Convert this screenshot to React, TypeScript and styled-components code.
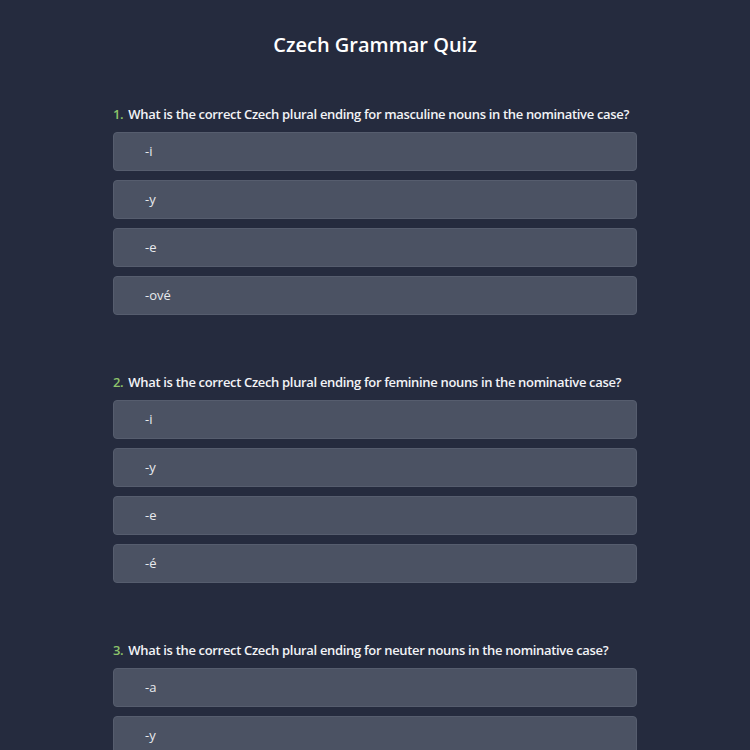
import React from 'react'
import styled, { createGlobalStyle } from 'styled-components'

interface Question {
  text: string
  options: string[]
}

const questions: Question[] = [
  {
    text: 'What is the correct Czech plural ending for masculine nouns in the nominative case?',
    options: ['-i', '-y', '-e', '-ové'],
  },
  {
    text: 'What is the correct Czech plural ending for feminine nouns in the nominative case?',
    options: ['-i', '-y', '-e', '-é'],
  },
  {
    text: 'What is the correct Czech plural ending for neuter nouns in the nominative case?',
    options: ['-a', '-y', '-e', '-í'],
  },
]

const GlobalStyle = createGlobalStyle`
  html,
  body {
    margin: 0;
    background: #252b3e;
    font-family: "Open Sans", "Noto Sans", sans-serif;
    color: #f3f4f6;
  }
`

const Page = styled.div`
  width: 524px;
  margin: 0 auto;
  padding-top: 31px;
`

const Title = styled.h1`
  margin: 0 0 45px 0;
  font-size: 20px;
  line-height: 28px;
  font-weight: 600;
  text-align: center;
  color: #ffffff;
`

const Block = styled.div`
  margin-bottom: 57px;
`

const Prompt = styled.div`
  font-size: 13px;
  line-height: 20px;
  font-weight: 600;
  letter-spacing: -0.33px;
  color: #f2f3f6;
  margin-bottom: 8px;
`

const Number = styled.span`
  color: #8dc46b;
  margin-right: 5px;
`

const Options = styled.div`
  display: flex;
  flex-direction: column;
  gap: 9px;
`

const Option = styled.button`
  display: block;
  width: 100%;
  text-align: left;
  background: #4b5263;
  border: 1px solid #565d6e;
  border-radius: 4px;
  padding: 9px 31px;
  font-family: inherit;
  font-size: 13px;
  line-height: 19px;
  color: #e8eaee;
  cursor: pointer;
`

export default function App() {
  return (
    <Page>
      <GlobalStyle />
      <Title>Czech Grammar Quiz</Title>
      {questions.map((q, i) => (
        <Block key={i}>
          <Prompt>
            <Number>{i + 1}.</Number>
            {q.text}
          </Prompt>
          <Options>
            {q.options.map(o => (
              <Option key={o}>{o}</Option>
            ))}
          </Options>
        </Block>
      ))}
    </Page>
  )
}
